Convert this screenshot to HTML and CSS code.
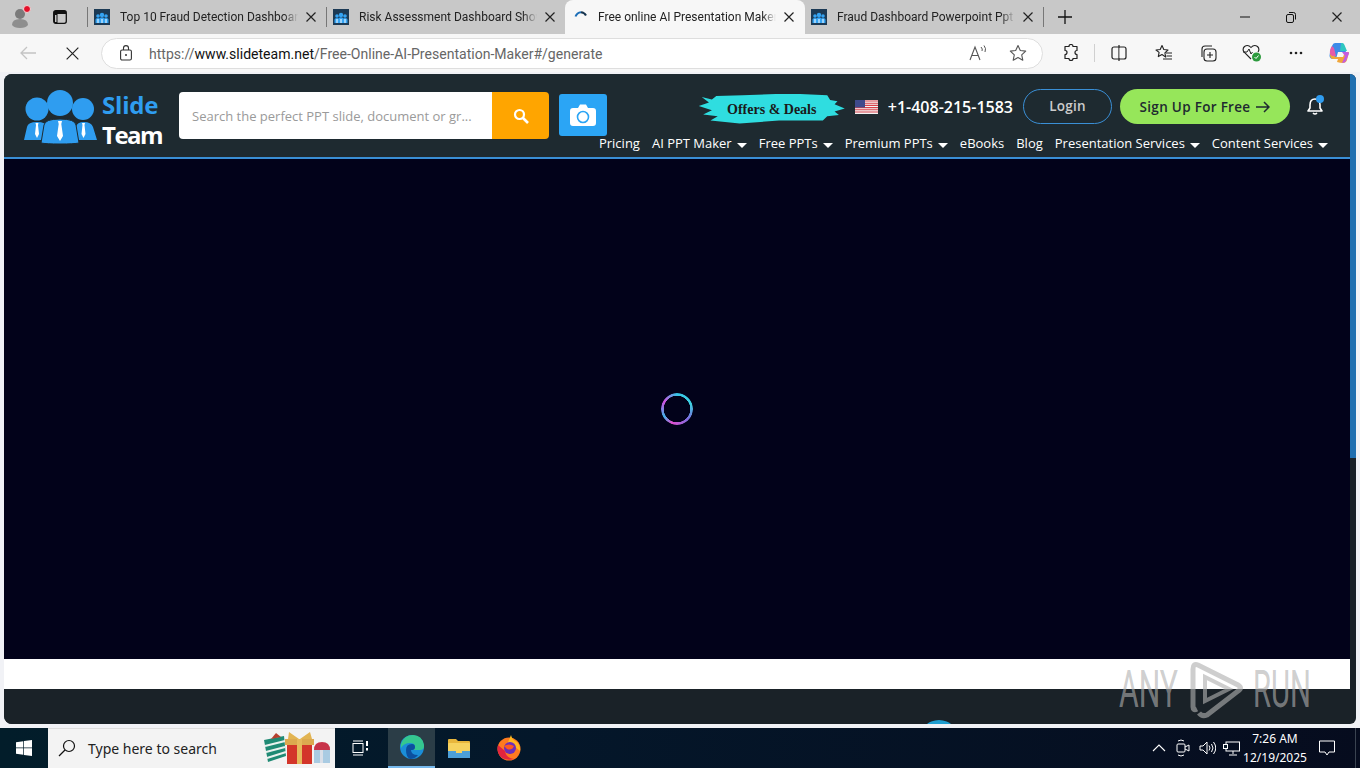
FILE: index.html
```html
<!DOCTYPE html>
<html lang="en">
<head>
    <meta charset="UTF-8">
    <meta name="viewport" content="width=device-width, initial-scale=1.0">
    <title>Free online AI Presentation Maker</title>
    <link rel="stylesheet" href="styles.css">
</head>
<body>
    <svg class="defs" width="0" height="0">
        <symbol id="favicon" viewBox="0 0 16 16">
            <rect width="16" height="16" fill="#1c3a55"/>
            <circle cx="4" cy="7" r="1.8" fill="#35a4f4"/>
            <circle cx="8" cy="6" r="2.2" fill="#35a4f4"/>
            <circle cx="12" cy="7" r="1.8" fill="#35a4f4"/>
            <path d="M1.500 14v-3.500q0-1.500 2.500-1.500t2.500 1.500v3.500zM5.500 14v-4q0-1.800 2.500-1.800t2.500 1.800v4zM9.500 14v-3.500q0-1.500 2.500-1.500t2.500 1.500v3.500z" fill="#35a4f4"/>
            <path d="M4 10v4M8 10v4M12 10v4" stroke="#fff" stroke-width="1"/>
        </symbol>
        <symbol id="close" viewBox="0 0 10 10">
            <path d="M.5.500l9 9M9.500.500l-9 9" fill="none" stroke="#222" stroke-width="1.200"/>
        </symbol>
    </svg>

    <div class="browser">
        <div class="tabstrip">
            <div class="profile">
                <svg width="24" height="24" viewBox="0 0 24 24">
                    <circle cx="10" cy="10" r="5" fill="#7b7b7b"/>
                    <path d="M2 21q0-6 8-6t8 6q-2 3-8 3t-8-3z" fill="#8e8e8e"/>
                    <circle cx="17" cy="5" r="3.500" fill="#e3102a" stroke="#f2d6d6"/>
                </svg>
            </div>
            <div class="tab-toggle">
                <svg width="14" height="14" viewBox="0 0 14 14">
                    <rect x=".7" y=".7" width="12.600" height="12.600" rx="2" fill="none" stroke="#111" stroke-width="1.300"/>
                    <path d="M1 1h12v3H1zM1 4h3.500v9H1z" fill="#111"/>
                    <rect x="2" y="5" width="1.500" height="7" fill="#c9c9c9"/>
                </svg>
            </div>
            <div class="tab-sep"></div>
            <div class="tab">
                <svg class="favicon" width="16" height="16"><use href="#favicon"/></svg>
                <span class="tab-title">Top 10 Fraud Detection Dashboard Templates</span>
                <span class="tab-close"><svg width="10" height="10"><use href="#close"/></svg></span>
            </div>
            <div class="tab-sep"></div>
            <div class="tab">
                <svg class="favicon" width="16" height="16"><use href="#favicon"/></svg>
                <span class="tab-title">Risk Assessment Dashboard Showing Scores</span>
                <span class="tab-close"><svg width="10" height="10"><use href="#close"/></svg></span>
            </div>
            <div class="tab tab-active">
                <svg class="favicon" width="16" height="16" viewBox="0 0 16 16">
                    <path d="M2.500 7.500Q4 3.500 8 3.200" fill="none" stroke="#1d6fb8" stroke-width="2"/>
                    <path d="M8 3.200Q11.500 3.500 13 6.500" fill="none" stroke="#16344f" stroke-width="2"/>
                </svg>
                <span class="tab-title">Free online AI Presentation Maker for PPT</span>
                <span class="tab-close"><svg width="10" height="10"><use href="#close"/></svg></span>
            </div>
            <div class="tab tab-last">
                <svg class="favicon" width="16" height="16"><use href="#favicon"/></svg>
                <span class="tab-title">Fraud Dashboard Powerpoint Ppt Template</span>
                <span class="tab-close"><svg width="10" height="10"><use href="#close"/></svg></span>
            </div>
            <div class="tab-sep"></div>
            <div class="new-tab">
                <svg width="14" height="14" viewBox="0 0 14 14"><path d="M7 0v14M0 7h14" stroke="#111" stroke-width="1.300"/></svg>
            </div>
            <div class="window-btns">
                <span class="window-btn"><svg width="10" height="10" viewBox="0 0 10 10"><path d="M0 5h10" stroke="#111"/></svg></span>
                <span class="window-btn"><svg width="10" height="11" viewBox="0 0 10 11"><rect x=".5" y="2.500" width="7" height="8" rx="1.500" fill="none" stroke="#111"/><path d="M3 .5h4.500q2 0 2 2v5" fill="none" stroke="#111"/></svg></span>
                <span class="window-btn"><svg width="10" height="10"><use href="#close"/></svg></span>
            </div>
        </div>

        <div class="toolbar">
            <span class="nav-btn">
                <svg width="16" height="14" viewBox="0 0 16 14"><path d="M16 7H1M7 1L1 7l6 6" fill="none" stroke="#c4c4c4" stroke-width="1.300"/></svg>
            </span>
            <span class="nav-btn">
                <svg width="13" height="13" viewBox="0 0 10 10"><path d="M.5.500l9 9M9.500.500l-9 9" fill="none" stroke="#222" stroke-width=".9"/></svg>
            </span>
            <div class="address">
                <svg class="lock" width="12" height="16" viewBox="0 0 12 16">
                    <rect x=".6" y="5" width="10.800" height="10" rx="1.500" fill="none" stroke="#333" stroke-width="1.100"/>
                    <path d="M3.500 5V3q0-2.400 2.500-2.400T8.500 3v2" fill="none" stroke="#333" stroke-width="1.100"/>
                    <circle cx="6" cy="10" r="1" fill="#333"/>
                </svg>
                <span class="url">https://<b>www.slideteam.net</b>/Free-Online-AI-Presentation-Maker#/generate</span>
                <svg class="read-aloud" width="18" height="16" viewBox="0 0 18 16">
                    <path d="M1 15L6 2l5 13M3 10.500h6" fill="none" stroke="#555" stroke-width="1.100"/>
                    <path d="M12 2q2 2 1 4M15 .5q2.500 3 1 6.500" fill="none" stroke="#555"/>
                </svg>
                <svg class="star" width="18" height="18" viewBox="0 0 18 18">
                    <path d="M9 1.500l2.300 5 5.400.6-4 3.700 1.100 5.400L9 13.500l-4.800 2.700 1.100-5.400-4-3.700 5.400-.6z" fill="none" stroke="#555" stroke-width="1.100" stroke-linejoin="round"/>
                </svg>
            </div>
            <div class="tool-icons">
                <span class="tool">
                    <svg width="16" height="18" viewBox="0 0 16 18"><path d="M6 3q0-2 2-2t2 2h4v4q-2 0-2 2t2 2v4h-4q0 2-2 2t-2-2H2v-4q2 0 2-2T2 7V3z" transform="translate(0 -.500)" fill="none" stroke="#222" stroke-width="1.200" stroke-linejoin="round"/></svg>
                </span>
                <span class="tool-sep"></span>
                <span class="tool tool-split">
                    <svg width="16" height="16" viewBox="0 0 16 16"><rect x="1" y="2" width="14" height="12" rx="2" fill="none" stroke="#222" stroke-width="1.200"/><path d="M8 0v16" stroke="#222" stroke-width="1.200"/><rect x="8.600" y="3" width="5.400" height="10" fill="#f7f7f7"/></svg>
                </span>
                <span class="tool">
                    <svg width="18" height="18" viewBox="0 0 18 18"><path d="M7 1.500l1.800 4 4.200.5-3.100 2.900.8 4.200L7 10.500l-3.700 2.100.8-4.200L1 6l4.200-.5z" fill="none" stroke="#222" stroke-width="1.100" stroke-linejoin="round"/><path d="M11 9h6M11.500 12h5.500M8 15h9" stroke="#222" stroke-width="1.100"/></svg>
                </span>
                <span class="tool">
                    <svg width="18" height="18" viewBox="0 0 18 18"><rect x="5" y="5" width="12" height="12" rx="3" fill="none" stroke="#222" stroke-width="1.100"/><path d="M3 13V5q0-3 3-3h7" fill="none" stroke="#222" stroke-width="1.100"/><path d="M11 8v6M8 11h6" stroke="#222" stroke-width="1.100"/></svg>
                </span>
                <span class="tool">
                    <svg width="20" height="18" viewBox="0 0 20 18"><path d="M9 15L2 8q-2-3 .500-5.500Q6 0 9 3.500 12 0 15.500 2.500 18 5 16 8" fill="none" stroke="#222" stroke-width="1.100"/><path d="M1 8h4l2-3 2 5 1.500-2" fill="none" stroke="#222"/><circle cx="14.500" cy="13" r="4.500" fill="#2c9a3d"/><path d="M12.500 13l1.500 1.500 2.500-3" fill="none" stroke="#fff"/></svg>
                </span>
                <span class="tool">
                    <svg width="14" height="4" viewBox="0 0 14 4"><circle cx="2" cy="2" r="1.300" fill="#222"/><circle cx="7" cy="2" r="1.300" fill="#222"/><circle cx="12" cy="2" r="1.300" fill="#222"/></svg>
                </span>
                <span class="tool copilot">
                    <svg width="22" height="22" viewBox="0 0 22 22">
                        <path d="M7 1h6q2 0 2.500 2L18 10H10L8 17H5q-3 0-3.500-3Q2 8 4 4q1-3 3-3z" fill="#3d8be8"/>
                        <path d="M13 1h1q2 0 2.500 2L19 9h-7z" fill="#2fc6c0"/>
                        <path d="M2 12q0 5 3 5h5l-1 3q3 1 6 1 3 0 4-3l2-8h-4l-2 5H8z" fill="#f0a63a"/>
                        <path d="M2 12q-.500-5 2-8l2 2 2 8H4z" fill="#e65aa8"/>
                        <path d="M14 10h5q2 0 2 1t-1 3l-2 5q-1 2-4 2l3-7z" fill="#c55be0"/>
                    </svg>
                </span>
            </div>
        </div>

        <div class="viewport">
            <div class="page">
                <header class="site-header">
                    <div class="logo">
                        <svg class="logo-mark" width="76" height="56" viewBox="0 0 76 56">
                            <circle cx="13" cy="19" r="11.500" fill="#2f9df0"/>
                            <circle cx="59" cy="19" r="11" fill="#2f9df0"/>
                            <circle cx="36" cy="13" r="13" fill="#2f9df0"/>
                            <path d="M0 50L3 37q1-5 10-5t10 5l4 13zM49 50l3-13q1-5 8-5t9 5l4 13z" fill="#2f9df0"/>
                            <path d="M17 53l3-18q1-6 16-6t16 6l3 18q-5 1-19 1t-19-1z" fill="#2f9df0" stroke="#1e2a30"/>
                            <path d="M34 31h4l-.7 3 1.700 12-3 5-3-5 1.700-12z" fill="#fff"/>
                            <path d="M11.500 33h3l-.5 2 1 9-2 4-2-4 1-9zM58 33h3l-.5 2 1 9-2 4-2-4 1-9z" fill="#fff"/>
                        </svg>
                        <div class="logo-text">
                            <span class="logo-slide">Slide</span>
                            <span class="logo-team">Team</span>
                        </div>
                    </div>
                    <div class="search">
                        <span class="search-input">Search the perfect PPT slide, document or gr...</span>
                        <span class="search-btn">
                            <svg width="16" height="16" viewBox="0 0 16 16"><circle cx="6.500" cy="6.500" r="4.500" fill="none" stroke="#fff" stroke-width="2.200"/><path d="M10 10l5 5" stroke="#fff" stroke-width="2.600"/></svg>
                        </span>
                    </div>
                    <div class="camera">
                        <svg width="26" height="22" viewBox="0 0 26 22">
                            <path d="M3 4h5l2-3.500h6L18 4h5q3 0 3 3v12q0 3-3 3H3q-3 0-3-3V7q0-3 3-3z" fill="#fff"/>
                            <circle cx="13" cy="13" r="5.500" fill="none" stroke="#2ba5f5" stroke-width="1.600"/>
                        </svg>
                    </div>
                    <div class="header-right">
                        <div class="header-top">
                            <div class="offers">Offers &amp; Deals</div>
                            <svg class="flag" width="23" height="14" viewBox="0 0 23 14">
                                <rect width="23" height="14" fill="#f4f4f4"/>
                                <path d="M0 1h23M0 3.200h23M0 5.400h23M0 7.600h23M0 9.800h23M0 12h23" stroke="#d8404a" stroke-width="1.100"/>
                                <rect width="10" height="7.500" fill="#3f4a8c"/>
                            </svg>
                            <span class="phone">+1-408-215-1583</span>
                            <span class="btn-login">Login</span>
                            <span class="btn-signup">Sign Up For Free
                                <svg width="14" height="12" viewBox="0 0 14 12"><path d="M0 6h13M8 1l5 5-5 5" fill="none" stroke="#1e2a30" stroke-width="1.500"/></svg>
                            </span>
                            <span class="bell">
                                <svg width="20" height="22" viewBox="0 0 20 22">
                                    <path d="M9 5q-5 0-5 6v3l-2 3h14l-2-3v-3q0-6-5-6z" fill="none" stroke="#fff" stroke-width="1.600" stroke-linejoin="round"/>
                                    <path d="M7 19q2 2 4 0" fill="none" stroke="#fff" stroke-width="1.600"/>
                                    <circle cx="14" cy="5" r="4" fill="#2f9df0"/>
                                </svg>
                            </span>
                        </div>
                        <nav class="site-nav">
                            <a>Pricing</a>
                            <a>AI PPT Maker<i class="caret"></i></a>
                            <a>Free PPTs<i class="caret"></i></a>
                            <a>Premium PPTs<i class="caret"></i></a>
                            <a>eBooks</a>
                            <a>Blog</a>
                            <a>Presentation Services<i class="caret"></i></a>
                            <a>Content Services<i class="caret"></i></a>
                        </nav>
                    </div>
                </header>
                <main class="generator">
                    <div class="loader"></div>
                </main>
                <div class="white-band"></div>
                <footer class="site-footer">
                    <div class="chat-bubble"></div>
                </footer>
            </div>
            <div class="scrollbar"><div class="scroll-thumb"></div></div>

            <svg class="watermark" width="194" height="62" viewBox="0 0 194 62">
                <text x="0" y="49" textLength="59" lengthAdjust="spacingAndGlyphs">ANY</text>
                <g transform="translate(4 -1)">
                    <path d="M70 12V50q0 4 4 2M70 12q0-6 5-4l40 20q5 3 0 6L84 58q-5 2-8-2" fill="none" stroke-width="5"/>
                    <path d="M82 20V44l24-12z" fill="none" stroke-width="4"/>
                </g>
                <text x="134" y="49" textLength="58" lengthAdjust="spacingAndGlyphs">RUN</text>
            </svg>
        </div>

        <div class="taskbar">
            <div class="start">
                <svg width="16" height="16" viewBox="0 0 16 16"><path d="M0 2.300L7.300 1.200V7.500H0zM8 1.100L16 0V7.500H8zM0 8.200H7.300V14.800L0 13.700zM8 8.200H16V16L8 14.900z" fill="#fff"/></svg>
            </div>
            <div class="task-search">
                <svg width="18" height="18" viewBox="0 0 18 18"><circle cx="11" cy="7" r="5.500" fill="none" stroke="#111" stroke-width="1.200"/><path d="M7 11l-6 6" stroke="#111" stroke-width="1.300"/></svg>
                <span class="task-search-text">Type here to search</span>
                <svg class="gifts" width="68" height="32" viewBox="0 0 68 32">
                    <path d="M0 8l20-4 2 20-18 6z" fill="#1f8a74"/>
                    <path d="M1 14l20-5M2 20l19-5M3 26l19-6" stroke="#e9f1ee" stroke-width="2"/>
                    <path d="M7 7l5-6 5 4z" fill="#b5402f"/>
                    <rect x="23" y="10" width="25" height="22" fill="#d3352a"/>
                    <rect x="21" y="7" width="29" height="6" fill="#dca94f"/>
                    <rect x="33" y="7" width="5" height="25" fill="#e6b95c"/>
                    <path d="M35 7L25 0l-1 7zM36 7l10-7 2 7z" fill="#e2b452"/>
                    <rect x="50" y="18" width="16" height="13" fill="#a9cbe2"/>
                    <path d="M50 18q0-8 8-8t8 8z" fill="#c8344a"/>
                    <rect x="56" y="18" width="3" height="13" fill="#d9dfe8"/>
                </svg>
            </div>
            <div class="task-view">
                <svg width="16" height="16" viewBox="0 0 16 16"><rect x="1" y="3.500" width="10" height="9" fill="none" stroke="#fff"/><path d="M1 1h10M1 15h10" stroke="#fff"/><rect x="14" y="1" width="2" height="5" fill="#fff"/><rect x="14" y="8" width="2" height="2.500" fill="#fff"/></svg>
            </div>
            <div class="task-app task-app-active">
                <svg width="24" height="24" viewBox="0 0 24 24">
                    <circle cx="12" cy="12" r="12" fill="#1b8ed8"/>
                    <path d="M1 9Q4 0 13 0q9 0 11 10 .500 5-4 5H12q3 0 3-3 0-4-5-4Q4 8 1 13z" fill="#35c78f"/>
                    <path d="M6 15q0-6 6-6 3 0 3 3 0 3-3 3h-1q0 5 7 5-3 4-8 4-4-2-4-9z" fill="#0c4f9e"/>
                </svg>
            </div>
            <div class="task-app">
                <svg width="22" height="20" viewBox="0 0 22 20">
                    <path d="M0 2q0-1 1-1h7l2 2h11q1 0 1 1v3H0z" fill="#e8b63c"/>
                    <rect y="5" width="22" height="15" rx="1" fill="#f6d25f"/>
                    <rect y="13" width="22" height="7" fill="#4c9fd8"/>
                    <rect x="8" y="11" width="6" height="4" fill="#f6d25f"/>
                </svg>
            </div>
            <div class="task-app task-app-last">
                <svg width="24" height="26" viewBox="0 0 24 26">
                    <circle cx="12" cy="14" r="11.500" fill="#ff7a1f"/>
                    <path d="M14 0q1 5 6 7 4 4 3 9-8-8-14-4z" fill="#ffb81f"/>
                    <path d="M1 10q-2 8 4 13 6 3 12 1-8-1-9-8z" fill="#e3243f"/>
                    <circle cx="13" cy="13" r="6" fill="#6c2fb9"/>
                    <path d="M7 11q5-3 10 0-2 5-7 3z" fill="#ff5a1f"/>
                </svg>
            </div>
            <div class="tray">
                <span class="tray-icon"><svg width="14" height="8" viewBox="0 0 14 8"><path d="M1 7l6-6 6 6" fill="none" stroke="#fff" stroke-width="1.100"/></svg></span>
                <span class="tray-icon"><svg width="14" height="18" viewBox="0 0 14 18"><rect x="1" y="5" width="8" height="8" rx="1" fill="none" stroke="#fff"/><path d="M9 8l4-2v6l-4-2M2 2q3-2 6 0M2 16q3 2 6 0" fill="none" stroke="#fff"/></svg></span>
                <span class="tray-icon"><svg width="17" height="14" viewBox="0 0 17 14"><path d="M1 5h3l4-4v12l-4-4H1z" fill="none" stroke="#fff"/><path d="M10 4.500q2 2.500 0 5M12.500 3q3 4 0 8M14.500 1q4.500 6 0 12" fill="none" stroke="#fff"/></svg></span>
                <span class="tray-icon"><svg width="17" height="15" viewBox="0 0 17 15"><rect x="3" y="1" width="13.500" height="9" fill="none" stroke="#fff"/><path d="M10 10v3M6 14h8" stroke="#fff"/><rect x=".5" y="3.500" width="4" height="4" fill="#0a1a28" stroke="#fff"/></svg></span>
                <div class="clock">
                    <span>7:26 AM</span>
                    <span>12/19/2025</span>
                </div>
                <span class="notify"><svg width="16" height="16" viewBox="0 0 16 16"><path d="M.5 1h15v11H10l-2 3-2-3H.5z" fill="none" stroke="#fff"/></svg></span>
            </div>
        </div>
    </div>
</body>
</html>
```

FILE: styles.css
```css
body {
    margin: 0;
    font-family: "Open Sans", "Noto Sans", sans-serif;
    color: #222;
}
.defs {
    display: block;
    height: 0;
}
.browser {
    width: 1360px;
    height: 768px;
    display: flex;
    flex-direction: column;
    overflow: hidden;
    background-color: #f3f3f3;
}

/* tab row */
.tabstrip {
    height: 34px;
    display: flex;
    align-items: center;
    background-color: #c8c8c8;
}
.profile {
    width: 44px;
    padding-left: 10px;
    box-sizing: border-box;
    display: flex;
    margin-top: -2px;
}
.tab-toggle {
    width: 43px;
    padding-left: 9px;
    box-sizing: border-box;
    display: flex;
}
.tab-sep {
    width: 1px;
    height: 20px;
    background-color: #777;
}
.tab {
    width: 238px;
    height: 34px;
    display: flex;
    align-items: center;
    padding-left: 6px;
    box-sizing: border-box;
    flex-shrink: 0;
}
.favicon {
    flex-shrink: 0;
    margin-right: 10px;
}
.tab-title {
    width: 178px;
    flex-shrink: 0;
    overflow: hidden;
    white-space: nowrap;
    font-family: Roboto, "Noto Sans", sans-serif;
    font-size: 12px;
    color: #222;
    -webkit-mask-image: linear-gradient(to right, #000 92%, transparent);
    mask-image: linear-gradient(to right, #000 92%, transparent);
}
.tab-close {
    width: 26px;
    display: flex;
    justify-content: center;
}
.tab-last {
    width: 239px;
    padding-left: 7px;
}
.tab-active {
    background-color: #f7f7f7;
    border-radius: 8px 8px 0 0;
    padding-left: 8px;
    margin-right: -1px;
    width: 240px;
}
.tab-active .favicon {
    margin-right: 9px;
}
.new-tab {
    width: 42px;
    display: flex;
    justify-content: center;
}
.window-btns {
    margin-left: auto;
    display: flex;
}
.window-btn {
    width: 46px;
    display: flex;
    justify-content: center;
}

/* address row */
.toolbar {
    height: 38px;
    display: flex;
    align-items: center;
    background-color: #f7f7f7;
}
.nav-btn {
    width: 44px;
    display: flex;
    justify-content: center;
    flex-shrink: 0;
}
.nav-btn:first-child {
    margin-left: 6px;
}
.address {
    width: 942px;
    height: 31px;
    margin-left: 7px;
    box-sizing: border-box;
    display: flex;
    align-items: center;
    padding-left: 18px;
    background-color: #fff;
    border: 1px solid #dedede;
    border-radius: 16px;
    flex-shrink: 0;
}
.url {
    margin-left: 17px;
    padding-top: 2px;
    font-family: Roboto, "Noto Sans", sans-serif;
    font-size: 14.060px;
    color: #666;
    white-space: nowrap;
}
.url b {
    font-weight: 400;
    color: #111;
}
.read-aloud {
    margin-left: auto;
}
.star {
    margin-left: 22px;
    margin-right: 15px;
}
.tool-icons {
    display: flex;
    align-items: center;
    margin-left: 6px;
}
.tool {
    width: 44px;
    display: flex;
    justify-content: center;
}
.tool-split {
    width: 46px;
}
.tool-sep {
    width: 1px;
    height: 18px;
    background-color: #d0d0d0;
    margin: 0 1px;
}
.copilot {
    width: 42px;
}

/* page area */
.viewport {
    height: 656px;
    padding: 2px 4px;
    box-sizing: border-box;
    display: flex;
    position: relative;
    background-color: #f1f2f6;
}
.page {
    width: 1346px;
    height: 650px;
    display: flex;
    flex-direction: column;
    background-color: #1a2228;
    border-radius: 8px 0 0 8px;
    overflow: hidden;
    flex-shrink: 0;
}
.scrollbar {
    width: 6px;
    height: 650px;
    background-color: #1a2228;
    border-radius: 0 8px 8px 0;
    overflow: hidden;
}
.scroll-thumb {
    height: 384px;
    background-color: #1f6fb0;
}
.site-header {
    height: 85px;
    box-sizing: border-box;
    flex-shrink: 0;
    display: flex;
    padding-left: 20px;
    background-color: #1e2a30;
    border-bottom: 2px solid #3a8fd6;
}
.logo {
    width: 139px;
    height: 56px;
    margin-top: 16px;
    display: flex;
    gap: 2px;
    flex-shrink: 0;
}
.logo-mark {
    flex-shrink: 0;
}
.logo-text {
    display: flex;
    flex-direction: column;
    font-weight: 700;
    font-size: 24px;
    line-height: 30px;
}
.logo-slide {
    color: #2f9df0;
    letter-spacing: -.2px;
}
.logo-team {
    color: #fff;
    letter-spacing: -1.500px;
}
.search {
    width: 370px;
    height: 47px;
    margin-top: 18px;
    margin-left: 16px;
    display: flex;
    border-radius: 4px;
    overflow: hidden;
    flex-shrink: 0;
}
.search-input {
    width: 313px;
    box-sizing: border-box;
    padding-left: 13px;
    background-color: #fff;
    font-size: 13px;
    line-height: 49px;
    color: #9a9a9a;
    white-space: nowrap;
}
.search-btn {
    width: 57px;
    display: flex;
    align-items: center;
    justify-content: center;
    background-color: #ffa500;
}
.camera {
    width: 48px;
    height: 42px;
    margin-top: 20px;
    margin-left: 10px;
    display: flex;
    align-items: center;
    justify-content: center;
    background-color: #2ba5f5;
    border-radius: 3px;
    flex-shrink: 0;
}
.header-right {
    flex: 1;
    min-width: 0;
    margin-left: -10px;
    display: flex;
    flex-direction: column;
    align-items: flex-end;
    padding-right: 22px;
}
.header-top {
    display: flex;
    align-items: center;
    margin-top: 15px;
    height: 35px;
}
.offers {
    width: 146px;
    height: 30px;
    margin-top: 4px;
    text-align: center;
    font-family: "Liberation Serif", serif;
    font-weight: 700;
    font-size: 14px;
    line-height: 31px;
    color: #1a1a1a;
    background-color: #2fdde0;
    clip-path: polygon(2% 12%, 9% 20%, 12% 8%, 30% 6%, 62% 0, 88% 6%, 90% 22%, 95% 26%, 93% 36%, 100% 50%, 93% 60%, 96% 72%, 88% 76%, 85% 90%, 55% 90%, 28% 100%, 8% 90%, 13% 76%, 3% 70%, 9% 56%, 0 42%, 7% 30%);
}
.flag {
    margin-left: 10px;
}
.phone {
    margin-left: 10px;
    font-size: 16px;
    font-weight: 600;
    color: #fff;
    white-space: nowrap;
}
.btn-login {
    width: 89px;
    height: 35px;
    margin-left: 10px;
    box-sizing: border-box;
    border: 1px solid #3a8fd6;
    border-radius: 18px;
    text-align: center;
    font-size: 13.500px;
    font-weight: 600;
    line-height: 33px;
    letter-spacing: .2px;
    color: #ccc;
}
.btn-signup {
    width: 170px;
    height: 35px;
    margin-left: 8px;
    display: flex;
    align-items: center;
    justify-content: center;
    gap: 6px;
    border-radius: 18px;
    background-color: #96e65a;
    font-size: 13.500px;
    font-weight: 600;
    letter-spacing: .3px;
    color: #1e2a30;
    white-space: nowrap;
}
.bell {
    width: 36px;
    margin-right: 2px;
    display: flex;
    justify-content: flex-end;
    margin-top: -4px;
}
.site-nav {
    display: flex;
    gap: 12px;
    margin-top: 10px;
}
.site-nav a {
    display: flex;
    align-items: center;
    font-size: 13px;
    line-height: 18px;
    color: #fff;
    white-space: nowrap;
}
.caret {
    width: 0;
    height: 0;
    margin-left: 5px;
    margin-top: 4px;
    border-left: 5px solid transparent;
    border-right: 5px solid transparent;
    border-top: 5px solid #fff;
}
.generator {
    height: 500px;
    flex-shrink: 0;
    display: flex;
    align-items: center;
    justify-content: center;
    background-color: #02021a;
}
.loader {
    width: 32px;
    height: 32px;
    border-radius: 50%;
    background: conic-gradient(#35c5e8 0deg, #3fd0e0 70deg, #7a6fe0 130deg, #e04fd0 200deg, #40b0e8 240deg, #d050e0 300deg, #35c5e8 360deg);
    -webkit-mask: radial-gradient(circle, transparent 13px, #000 13.500px);
    mask: radial-gradient(circle, transparent 13px, #000 13.500px);
}
.white-band {
    height: 30px;
    flex-shrink: 0;
    background-color: #fff;
}
.site-footer {
    flex: 1;
    position: relative;
    overflow: hidden;
    background-color: #1a2228;
}
.chat-bubble {
    position: absolute;
    left: 915px;
    top: 31px;
    width: 40px;
    height: 40px;
    border-radius: 50%;
    background-color: #1e9ed0;
}
.watermark {
    position: absolute;
    left: 1119px;
    top: 586px;
}
.watermark text {
    font-family: Roboto, sans-serif;
    font-weight: 400;
    font-size: 52px;
    fill: rgba(176, 176, 176, .62);
}
.watermark path {
    stroke: rgba(176, 176, 176, .62);
}

/* windows taskbar */
.taskbar {
    height: 40px;
    display: flex;
    align-items: stretch;
    background: linear-gradient(to right, #021d2a, #04172a 40%, #060c1e);
}
.start {
    width: 48px;
    display: flex;
    align-items: center;
    justify-content: center;
}
.task-search {
    width: 287px;
    display: flex;
    align-items: center;
    padding: 0 0 1px 10px;
    box-sizing: border-box;
    position: relative;
    background-color: #f3f3f3;
    border-top: 1px solid #ddd;
}
.task-search-text {
    margin-left: 12px;
    font-family: "Noto Sans", sans-serif;
    font-size: 14px;
    color: #222;
}
.gifts {
    position: absolute;
    right: 3px;
    top: 3px;
}
.task-view {
    width: 50px;
    margin-right: 3px;
    display: flex;
    align-items: center;
    justify-content: center;
}
.task-app {
    width: 47px;
    display: flex;
    align-items: center;
    justify-content: center;
    box-sizing: border-box;
}
.task-app-active {
    background-color: #2b3d47;
    border-bottom: 2px solid #76b9ed;
}
.task-app-last {
    margin-left: 3px;
}
.tray {
    margin-left: auto;
    margin-right: 4px;
    display: flex;
    align-items: center;
    padding-right: 6px;
    border-right: 1px solid #3a4350;
}
.tray-icon {
    width: 24px;
    display: flex;
    justify-content: center;
}
.clock {
    width: 60px;
    margin-left: 2px;
    display: flex;
    flex-direction: column;
    align-items: center;
    font-family: "Noto Sans", sans-serif;
    font-size: 12px;
    line-height: 19px;
    color: #fff;
}
.notify {
    width: 44px;
    display: flex;
    justify-content: center;
}
```
